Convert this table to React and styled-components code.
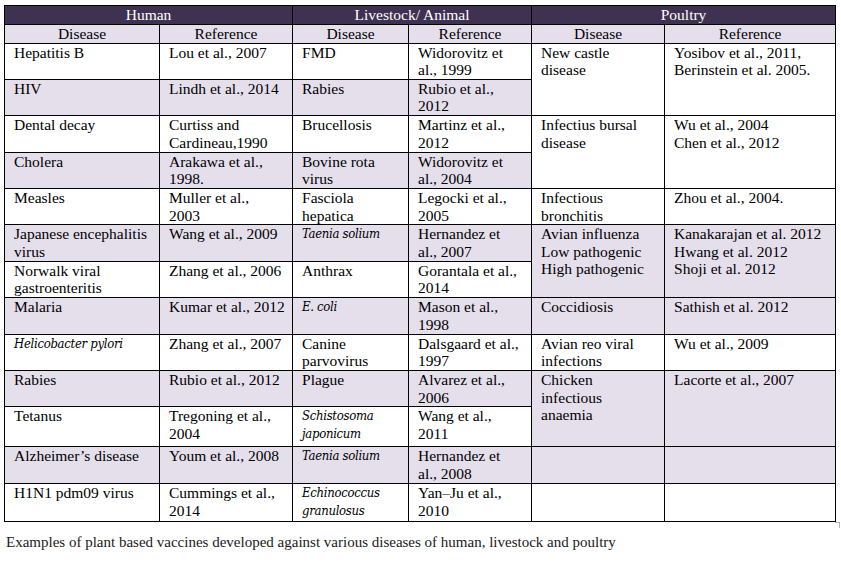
import React from 'react'
import styled, { createGlobalStyle } from 'styled-components'

const GlobalStyle = createGlobalStyle`
    body {
        margin: 0;
        background: #fff;
        font-family: "Liberation Serif", "Times New Roman", serif;
        color: #000;
    }
`;

// every cell keeps the line breaks of the printed table
const rows = [
    { h: ['Hepatitis B', 'Lou et al., 2007'], l: ['FMD', ['Widorovitz et', 'al., 1999']], p: { d: ['New castle', 'disease'], r: ['Yosibov et al., 2011,', 'Berinstein et al. 2005.'], span: 2 } },
    { h: ['HIV', 'Lindh et al., 2014'], l: ['Rabies', ['Rubio et al.,', '2012']] },
    { h: ['Dental decay', ['Curtiss and', 'Cardineau,1990']], l: ['Brucellosis', ['Martinz et al.,', '2012']], p: { d: ['Infectius bursal', 'disease'], r: ['Wu et al., 2004', 'Chen et al., 2012'], span: 2 } },
    { h: ['Cholera', ['Arakawa et al.,', '1998.']], l: [['Bovine rota', 'virus'], ['Widorovitz et', 'al., 2004']] },
    { h: ['Measles', ['Muller et al.,', '2003']], l: [['Fasciola', 'hepatica'], ['Legocki et al.,', '2005']], p: { d: ['Infectious', 'bronchitis'], r: ['Zhou et al., 2004.'], span: 1 } },
    { h: [['Japanese encephalitis', 'virus'], 'Wang et al., 2009'], l: ['Taenia solium', ['Hernandez et', 'al., 2007']], li: true, p: { d: ['Avian influenza', 'Low pathogenic', 'High pathogenic'], r: ['Kanakarajan et al. 2012', 'Hwang et al. 2012', 'Shoji et al. 2012'], span: 2, shade: true } },
    { h: [['Norwalk viral', 'gastroenteritis'], 'Zhang et al., 2006'], l: ['Anthrax', ['Gorantala et al.,', '2014']] },
    { h: ['Malaria', 'Kumar et al., 2012'], l: ['E. coli', ['Mason et al.,', '1998']], li: true, p: { d: ['Coccidiosis'], r: ['Sathish et al. 2012'], span: 1, shade: true } },
    { h: ['Helicobacter pylori', 'Zhang et al., 2007'], hi: true, l: [['Canine', 'parvovirus'], ['Dalsgaard et al.,', '1997']], p: { d: ['Avian reo viral', 'infections'], r: ['Wu et al., 2009'], span: 1 } },
    { h: ['Rabies', 'Rubio et al., 2012'], l: ['Plague', ['Alvarez et al.,', '2006']], p: { d: ['Chicken', 'infectious', 'anaemia'], r: ['Lacorte et al., 2007'], span: 2, shade: true } },
    { h: ['Tetanus', ['Tregoning et al.,', '2004']], l: [['Schistosoma', 'japonicum'], ['Wang et al.,', '2011']], li: true, height: 40 },
    { h: ['Alzheimer\u2019s disease', 'Youm et al., 2008'], l: ['Taenia solium', ['Hernandez et', 'al., 2008']], li: true, height: 37, p: { d: [], r: [], span: 1, shade: true } },
    { h: ['H1N1 pdm09 virus', ['Cummings et al.,', '2014']], l: [['Echinococcus', 'granulosus'], ['Yan\u2013Ju et al.,', '2010']], li: true, height: 38, p: { d: [], r: [], span: 1 } },
];

function Lines({ items, latin }) {
    const list = Array.isArray(items) ? items : [items];
    return list.map((t, i) => (latin ? <Latin key={i}>{t}</Latin> : <Line key={i}>{t}</Line>));
}

function App() {
    return (
        <Page>
            <GlobalStyle />
            <TableWrap>
                <Table>
                    <colgroup>
                        <col style={{ width: 155 }} />
                        <col style={{ width: 133 }} />
                        <col style={{ width: 116 }} />
                        <col style={{ width: 123 }} />
                        <col style={{ width: 133 }} />
                        <col style={{ width: 171 }} />
                    </colgroup>
                    <thead>
                        <tr>
                            <GroupHead colSpan={2}>Human</GroupHead>
                            <GroupHead colSpan={2}>Livestock/ Animal</GroupHead>
                            <GroupHead colSpan={2}>Poultry</GroupHead>
                        </tr>
                        <tr>
                            <SubHead>Disease</SubHead>
                            <SubHead>Reference</SubHead>
                            <SubHead>Disease</SubHead>
                            <SubHead>Reference</SubHead>
                            <SubHead>Disease</SubHead>
                            <SubHead>Reference</SubHead>
                        </tr>
                    </thead>
                    <tbody>
                        {rows.map((row, i) => (
                            <Row key={i} $shade={i % 2 === 1} $height={row.height || 36.4}>
                                <Cell><Lines items={row.h[0]} latin={row.hi} /></Cell>
                                <Cell><Lines items={row.h[1]} /></Cell>
                                <Cell><Lines items={row.l[0]} latin={row.li} /></Cell>
                                <Cell><Lines items={row.l[1]} /></Cell>
                                {row.p && (
                                    <PoultryCell rowSpan={row.p.span} $shade={row.p.shade}>
                                        <Lines items={row.p.d} />
                                    </PoultryCell>
                                )}
                                {row.p && (
                                    <PoultryCell rowSpan={row.p.span} $shade={row.p.shade}>
                                        <Lines items={row.p.r} />
                                    </PoultryCell>
                                )}
                            </Row>
                        ))}
                    </tbody>
                </Table>
                <EndMark />
            </TableWrap>
            <Caption>
                Examples of plant based vaccines developed against various diseases of human, livestock and poultry
            </Caption>
        </Page>
    )
}

export default App


const Page = styled.div`
    padding: 5px 0 0 4px;
    width: 841px;
    height: 575px;
    box-sizing: border-box;
`;

const TableWrap = styled.div`
    position: relative;
    width: 831px;
`;

const Table = styled.table`
    border-collapse: collapse;
    table-layout: fixed;
    width: 831px;
    color: #000;

    th, td {
        font-family: "Liberation Serif", "Times New Roman", serif;
        font-size: 15.5px;
        line-height: 17.5px;
    }
`;

const GroupHead = styled.th`
    background: #3f3151;
    color: #fff;
    font-weight: 400;
    height: 18px;
    padding: 0;
    border: 1px solid #000;
    text-align: center;
`;

const SubHead = styled.th`
    background: #e5dfec;
    font-weight: 400;
    height: 17px;
    padding: 0;
    border: 1px solid #000;
    text-align: center;
`;

const Row = styled.tr`
    height: ${p => p.$height}px;
    background: ${p => (p.$shade ? '#e5dfec' : '#fff')};
`;

const Cell = styled.td`
    border: 1px solid #000;
    padding: 0 2px 0 9px;
    vertical-align: top;
    white-space: nowrap;
    overflow: hidden;
`;

const PoultryCell = styled(Cell)`
    background: ${p => (p.$shade ? '#e5dfec' : '#fff')};
`;

const Line = styled.div``;

const Latin = styled.div`
    font-family: "DejaVu Serif Condensed", "Liberation Serif", serif;
    font-size: 13px;
    font-style: italic;
    letter-spacing: -0.3px;
`;

const EndMark = styled.span`
    position: absolute;
    right: -5px;
    bottom: -6px;
    width: 4px;
    height: 5px;
    border-top: 1px solid #b5b5b5;
    border-right: 1px solid #b5b5b5;
`;

const Caption = styled.p`
    margin: 12px 0 0 2px;
    font-family: "Liberation Serif", "Times New Roman", serif;
    font-size: 15px;
    color: #1a1a1a;
`;
